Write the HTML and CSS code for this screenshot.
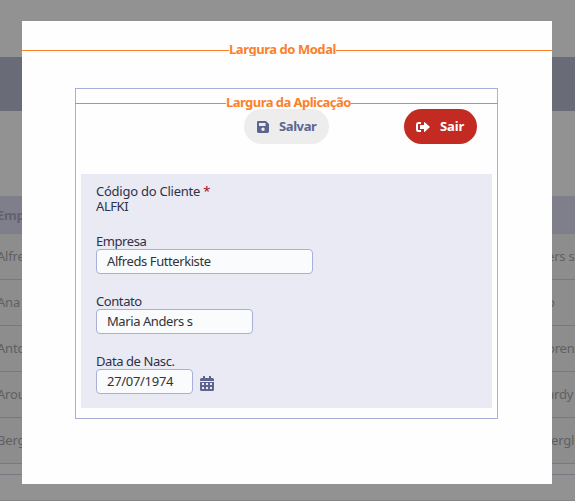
FILE: index.html
```html
<!DOCTYPE html>
<html lang="pt-BR">
<head>
<meta charset="utf-8">
<title>Clientes</title>
<link rel="stylesheet" href="styles.css">
</head>
<body>
<div class="page">
  <div class="toolbar"></div>
  <div class="grid">
    <div class="row head"><span class="left">Emp</span></div>
    <div class="row"><span class="left">Alfre</span><span class="right r1">ers s</span></div>
    <div class="row"><span class="left">Ana</span><span class="right r2">o</span></div>
    <div class="row"><span class="left">Anto</span><span class="right r3">oren</span></div>
    <div class="row"><span class="left">Arou</span><span class="right r4">ardy</span></div>
    <div class="row"><span class="left">Berg</span><span class="right r5">erglu</span></div>
  </div>
  <div class="grid-end"></div>
</div>
<main class="modal">
  <div class="measure outer"><span>Largura do Modal</span></div>
  <section class="app">
    <div class="measure inner"><span>Largura da Aplicação</span></div>
    <div class="actions">
      <button class="btn save"><svg width="12" height="12" viewBox="0 0 12 12"><path fill="currentColor" fill-rule="evenodd" d="M1.4 0H9L12 3V10.6Q12 12 10.6 12H1.4Q0 12 0 10.600V1.400Q0 0 1.400 0ZM2 2V5H8.500V2ZM6 6.500A1.750 1.750 0 1 0 6 10A1.750 1.750 0 1 0 6 6.500Z"/></svg><span>Salvar</span></button>
      <button class="btn exit"><svg width="14" height="12" viewBox="0 0 14 12"><path fill="none" stroke="currentColor" stroke-width="2" d="M5 2H2.500Q1 2 1 3.500V8.500Q1 10 2.500 10H5"/><path fill="currentColor" d="M4 4H8V1.500Q8 .5 8.800 1.200L13.500 5.500Q14 6 13.500 6.500L8.800 10.800Q8 11.500 8 10.500V8H4Z"/></svg><span>Sair</span></button>
    </div>
    <form class="form">
      <div class="field"><label class="code">Código do Cliente <b>*</b></label><span class="value">ALFKI</span></div>
      <div class="field"><label>Empresa</label><div class="input wide">Alfreds Futterkiste</div></div>
      <div class="field"><label>Contato</label><div class="input mid">Maria Anders s</div></div>
      <div class="field"><label>Data de Nasc.</label><div class="date"><div class="input small">27/07/1974</div><svg width="14" height="16" viewBox="0 0 14 16"><path fill="currentColor" fill-rule="evenodd" d="M3 0H5V2H9V0H11V2H12.500Q14 2 14 3.500V5H0V3.500Q0 2 1.500 2H3ZM0 6H14V13.500Q14 15 12.500 15H1.500Q0 15 0 13.500ZM2 7V9H4V7ZM6 7V9H8V7ZM10 7V9H12V7ZM2 11V13H4V11ZM6 11V13H8V11ZM10 11V13H12V11Z"/></svg></div></div>
    </form>
  </section>
</main>
</body>
</html>
```
FILE: styles.css
```css
* { box-sizing: border-box; }
body { margin: 0; width: 575px; height: 501px; overflow: hidden; font: 13px/15px "Noto Sans", sans-serif; letter-spacing: -0.42px; color: #2e3148; }
.page { height: 501px; padding-top: 57px; background: #929292; border-bottom: 1px solid #858585; overflow: hidden; }
.toolbar { height: 54px; margin-bottom: 85px; background: #696c77; }
.row { display: flex; justify-content: space-between; align-items: center; height: 46px; border-bottom: 1px solid #777785; background: #8d8d8d; color: #606060; }
.head { height: 38px; border: 0; background: #7f7e8b; color: #636071; font-weight: 700; }
.left { margin-left: -3px; letter-spacing: -0.2px; }
.right { width: 28px; white-space: nowrap; letter-spacing: -0.2px; }
.r1 { width: 26px; margin-right: 2px; }
.r5 { width: 24px; }
.grid-end { height: 11px; border-bottom: 1px solid #777785; background: #929292; }
.modal { position: absolute; left: 22px; top: 21px; width: 530px; height: 463px; padding-top: 20px; background: #fefefe; }
.measure { position: relative; z-index: 1; display: flex; align-items: center; height: 18px; color: #fa812b; font-weight: 700; white-space: nowrap; }
.measure::before, .measure::after { content: ""; flex: 1; height: 1px; background: currentColor; }
.measure span { padding-bottom: 2px; letter-spacing: -0.45px; }
.outer::before { flex: 0 0 207px; }
.outer span { height: 14px; margin-bottom: 3px; padding: 0; overflow: hidden; }
.app { width: 423px; height: 331px; margin: 29px 0 0 53px; padding: 5px; border: 1px solid #a9afd9; }
.inner { margin: 0 -6px; }
.inner::before { flex: 0 0 151px; }
.inner span { letter-spacing: -0.54px; }
.actions { display: flex; height: 35px; margin: -3px 0 30px; padding-left: 163px; gap: 75px; }
.btn { display: flex; align-items: center; height: 35px; gap: 10px; padding: 0 0 0 13px; border: 0; border-radius: 18px; font: 700 13px/15px "Noto Sans", sans-serif; }
.save { width: 85px; background: #ededed; color: #5d6490; letter-spacing: -0.4px; }
.exit { width: 73px; padding-left: 12px; background: #c22a22; color: #fff; letter-spacing: -0.1px; }
.form { height: 234px; padding: 10px 15px; background: #eaeaf4; }
.field { height: 60px; }
.field:first-child { height: 50px; }
.field label, .value { display: block; height: 15px; }
.field .code { letter-spacing: -0.24px; }
.field b { color: #a82727; font-weight: 500; }
.input { height: 25px; padding: 4px 10px; border: 1px solid #a9afd9; border-radius: 4px; background: #f9fbfd; color: #333; white-space: nowrap; }
.wide { width: 217px; }
.mid { width: 157px; }
.small { width: 97px; letter-spacing: -0.3px; }
.date { display: flex; gap: 7px; color: #5d6490; }
.date svg { margin-top: 7px; }
```
